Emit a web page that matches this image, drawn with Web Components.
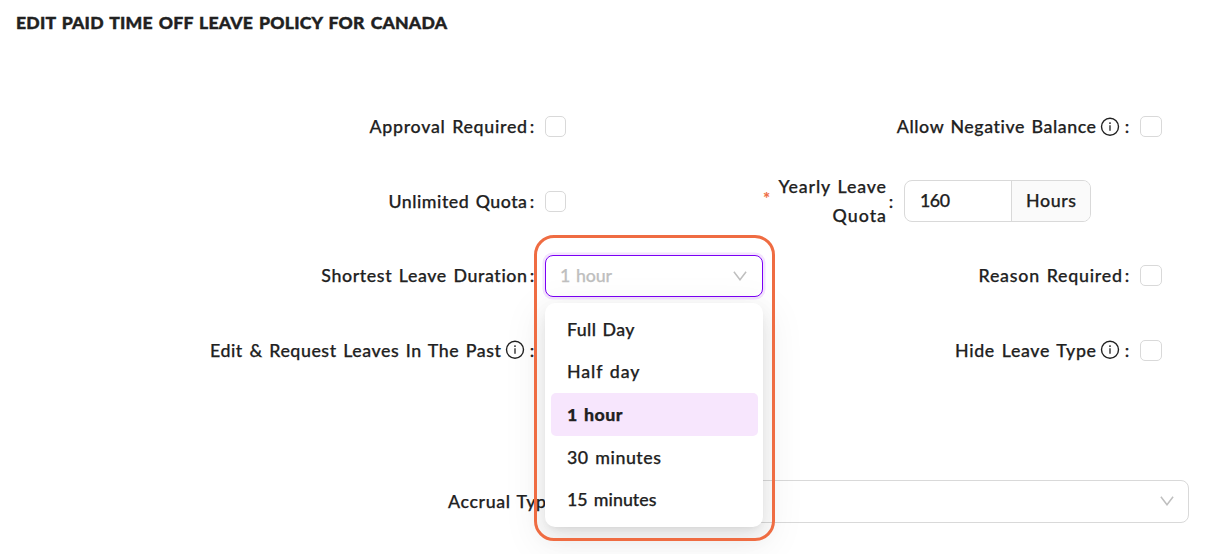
<!DOCTYPE html>
<html lang="en">
<head>
<meta charset="utf-8">
<title>Leave policy</title>
<style>
  html, body {
    margin: 0;
    height: 554px;
    overflow: hidden;
    background: #fff;
  }
</style>
</head>
<body>
<leave-policy-page></leave-policy-page>
<script>
(() => {
  const define = (name, html, setup) => {
    customElements.define(name, class extends HTMLElement {
      constructor() {
        super()
        this.attachShadow({ mode: 'open' }).innerHTML = html
      }

      connectedCallback() {
        if (setup) setup(this, this.shadowRoot)
      }
    })
  }

  // One line of text, tracked so that it fills the given width
  define('fit-text', `
    <style>
      :host { display: block; flex: none; }
      span { display: block; width: max-content; white-space: nowrap; }
    </style>
    <span><slot></slot></span>
  `, (host, root) => {
    const width = Number(host.getAttribute('width'))
    const span = root.querySelector('span')
    const natural = span.getBoundingClientRect().width
    const spacing = (width - natural) / (host.textContent.length - 1)
    span.style.letterSpacing = `${spacing}px`
    span.style.marginRight = `${-spacing}px`
  })

  define('info-icon', `
    <style>
      :host { display: block; width: 20px; height: 20px; flex: none; }
      svg { display: block; }
    </style>
    <svg width="20" height="20" viewBox="0 0 20 20" fill="none" stroke="#212121">
      <circle cx="10" cy="9.7" r="8.5" stroke-width="1.4"/>
      <path d="M10 8.3V13.7" stroke-width="1.3"/>
      <circle cx="10" cy="6.1" r=".95" fill="#212121" stroke="none"/>
    </svg>
  `)

  define('chevron-icon', `
    <style>
      :host { display: block; width: 14px; height: 10px; flex: none; }
      svg { display: block; }
    </style>
    <svg width="14" height="10" viewBox="0 0 14 10" fill="none" stroke="#bfbfbf" stroke-width="1.5">
      <path d="M.9 .8 7 8.8 13.1 .8"/>
    </svg>
  `)

  define('check-box', `
    <style>
      :host {
        display: block;
        box-sizing: border-box;
        width: var(--box-width, 22px);
        height: 21px;
        flex: none;
        border: 1px solid #d9d9d9;
        border-radius: 5px;
        background: #fff;
      }
    </style>
  `)

  define('form-field', `
    <style>
      :host { display: flex; align-items: center; height: 100%; }
      .label {
        display: flex;
        align-items: center;
        justify-content: flex-end;
        flex: none;
        box-sizing: border-box;
        width: var(--label-width);
      }
      .colon { width: 8px; text-align: center; margin-left: 1px; margin-right: 9px; flex: none; }
      :host([info]) .colon { margin-left: 3px; }
      :host(:not([info])) info-icon { display: none; }
      info-icon { margin-left: 4px; }
    </style>
    <div class="label">
      <slot name="label"></slot>
      <info-icon></info-icon>
      <span class="colon">:</span>
    </div>
    <slot></slot>
  `)

  define('select-box', `
    <style>
      :host {
        display: flex;
        align-items: center;
        justify-content: space-between;
        box-sizing: border-box;
        height: 42px;
        padding: 0 15px 0 14px;
        border: 1px solid #d9d9d9;
        border-radius: 8px;
        background: #fff;
        color: #bfbfbf;
      }
      :host([open]) {
        border-color: #7b00f5;
        box-shadow: 0 0 0 2.5px #f4e5fe;
      }
      chevron-icon { margin-left: auto; }
    </style>
    <slot></slot>
    <chevron-icon></chevron-icon>
  `)

  define('number-input', `
    <style>
      :host {
        display: flex;
        box-sizing: border-box;
        width: 187px;
        height: 42px;
        border: 1px solid #d9d9d9;
        border-radius: 8px;
        overflow: hidden;
      }
      .value, .addon { display: flex; align-items: center; }
      .value { width: 91px; padding-left: 15px; flex: none; }
      .addon {
        flex: 1;
        padding-left: 14px;
        border-left: 1px solid #d9d9d9;
        background: #fafafa;
      }
    </style>
    <div class="value"><slot></slot></div>
    <div class="addon"><slot name="unit"></slot></div>
  `)

  define('menu-option', `
    <style>
      :host {
        display: flex;
        align-items: center;
        height: 42.6px;
        padding-left: 16px;
        border-radius: 5px;
      }
      :host([selected]) { background: #f7e6fd; font-weight: 900; }
    </style>
    <slot></slot>
  `)

  define('option-menu', `
    <style>
      :host {
        display: block;
        box-sizing: border-box;
        width: 218px;
        height: 224px;
        padding: 5px 5px 5px 6px;
        border-radius: 10px;
        background: #fff;
        box-shadow: 0 8px 21px rgba(0, 0, 0, .08),
          0 4px 8px -5px rgba(0, 0, 0, .12),
          0 12px 37px 11px rgba(0, 0, 0, .05);
      }
    </style>
    <slot></slot>
  `)

  define('leave-policy-page', `
    <style>
      :host {
        display: block;
        position: relative;
        width: 1214px;
        height: 554px;
        overflow: hidden;
        font: 500 17.8px/29px Lato, "Open Sans", sans-serif;
        -webkit-text-stroke: .25px;
        word-spacing: 1.5px;
        color: #212121;
      }
      h1 {
        display: flex;
        box-sizing: border-box;
        margin: 0;
        padding: 8px 16px 0;
        height: 89.9px;
        font-size: 17.6px;
        font-weight: 900;
        -webkit-text-stroke: .4px;
      }
      .fields {
        display: grid;
        grid-template-columns: 763px 451px;
        grid-template-rows: 74px 75px 74px 75px;
      }
      .left { --label-width: 545px; --box-width: 21px; }
      .right { --label-width: 377px; }
      .quota { --label-width: 141px; }
      .quota number-input { margin-top: -1px; }
      .accrual { --label-width: 574px; height: 75px; margin-top: 76.1px; }
      .accrual select-box { width: 615px; height: 43px; padding-right: 14px; }
      .two-lines {
        display: flex;
        align-items: center;
        justify-content: space-between;
        width: 123px;
      }
      .lines { display: flex; flex-direction: column; align-items: flex-end; }
      .star { color: #ef6c42; font-size: 17px; margin-top: -5px; }
      .duration { width: 218px; }
      option-menu { position: absolute; left: 545px; top: 303px; }
      .highlight {
        position: absolute;
        left: 534px;
        top: 235px;
        box-sizing: border-box;
        width: 241px;
        height: 306px;
        border: 3px solid #ef6c42;
        border-radius: 20px;
      }
    </style>
    <h1><fit-text width="431">EDIT PAID TIME OFF LEAVE POLICY FOR CANADA</fit-text></h1>
    <div class="fields">
      <form-field class="left">
        <fit-text slot="label" width="157.5">Approval Required</fit-text>
        <check-box></check-box>
      </form-field>
      <form-field class="right" info>
        <fit-text slot="label" width="199.5">Allow Negative Balance</fit-text>
        <check-box></check-box>
      </form-field>
      <form-field class="left">
        <fit-text slot="label" width="138.5">Unlimited Quota</fit-text>
        <check-box></check-box>
      </form-field>
      <form-field class="quota">
        <div class="two-lines" slot="label">
          <span class="star">*</span>
          <div class="lines">
            <fit-text width="107.5">Yearly Leave</fit-text>
            <fit-text width="53.5">Quota</fit-text>
          </div>
        </div>
        <number-input>
          <fit-text width="30">160</fit-text>
          <fit-text slot="unit" width="50">Hours</fit-text>
        </number-input>
      </form-field>
      <form-field class="left">
        <fit-text slot="label" width="206">Shortest Leave Duration</fit-text>
        <select-box class="duration" open><fit-text width="52">1 hour</fit-text></select-box>
      </form-field>
      <form-field class="right">
        <fit-text slot="label" width="143.5">Reason Required</fit-text>
        <check-box></check-box>
      </form-field>
      <form-field class="left" info>
        <fit-text slot="label" width="291">Edit &amp; Request Leaves In The Past</fit-text>
      </form-field>
      <form-field class="right" info>
        <fit-text slot="label" width="141">Hide Leave Type</fit-text>
        <check-box></check-box>
      </form-field>
    </div>
    <form-field class="accrual">
      <fit-text slot="label" width="108">Accrual Type</fit-text>
      <select-box></select-box>
    </form-field>
    <option-menu>
      <menu-option><fit-text width="67.5">Full Day</fit-text></menu-option>
      <menu-option><fit-text width="72.5">Half day</fit-text></menu-option>
      <menu-option selected><fit-text width="55.5">1 hour</fit-text></menu-option>
      <menu-option><fit-text width="94">30 minutes</fit-text></menu-option>
      <menu-option><fit-text width="89.5">15 minutes</fit-text></menu-option>
    </option-menu>
    <div class="highlight"></div>
  `)
})()
</script>
</body>
</html>
